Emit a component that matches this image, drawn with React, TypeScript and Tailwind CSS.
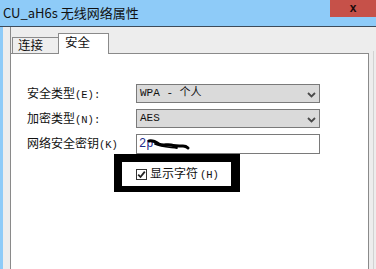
import React from 'react';

const cjk = { fontFamily: '"Noto Sans CJK SC", "Noto Sans", sans-serif' };
const mono = { fontFamily: '"Liberation Mono", "Noto Sans CJK SC", monospace' };

function Label({ text, hint }: { text: string; hint: string }) {
  return (
    <div className="w-[109px] shrink-0 text-[12px] leading-none text-[#111]" style={cjk}>
      {text}
      <span className="text-[10.5px]" style={mono}>
        {hint}
      </span>
    </div>
  );
}

function Chevron() {
  return (
    <svg width="9" height="6" viewBox="0 0 9 6" className="absolute right-[3px] top-[7px]">
      <path d="M1 1 L4.5 4.5 L8 1" fill="none" stroke="#4a4a4a" strokeWidth="1.8" />
    </svg>
  );
}

function Select({ value }: { value: string }) {
  return (
    <div className="relative h-[19px] w-[184px] border border-[#7a7a7a] bg-[#dadada] pl-[3px] flex items-center">
      <span className="text-[11px] leading-none text-[#111]" style={mono}>
        {value}
      </span>
      <Chevron />
    </div>
  );
}

export default function App() {
  return (
    <div className="relative flex h-[269px] w-[376px] flex-col overflow-hidden bg-[#ededed]">
      {/* title bar */}
      <div className="flex h-[27px] shrink-0 items-start border-b border-[#3d4b5a] bg-[#8ecbf8]">
        <div className="flex-1 pl-[3px] pt-[5px] text-[13px] leading-[15px] text-[#111]" style={cjk}>
          CU_aH6s 无线网络属性
        </div>
        <div className="flex h-[17px] w-[46px] items-center justify-center bg-[#c65149] pb-[2px]">
          <span className="text-[12px] font-bold leading-none text-[#1a0b0b]" style={{ fontFamily: '"Liberation Sans", sans-serif' }}>
            x
          </span>
        </div>
      </div>

      {/* body */}
      <div className="flex flex-1">
        <div className="w-[3px] shrink-0 bg-[#8ecbf8]" />
        <div className="w-[7px] shrink-0" />
        <div className="flex w-[359px] shrink-0 flex-col border-l border-[#8a8a8a]">
          {/* tabs */}
          <div className="flex h-[26px] shrink-0 items-end pl-[1px]">
            <div className="flex h-[16px] w-[46px] items-center justify-start border-l border-t border-[#8a8a8a] bg-[#eeeeee] pl-[5px] text-[12.5px] leading-none text-[#111]" style={cjk}>
              连接
            </div>
            <div className="relative z-10 -mb-px flex h-[21px] w-[51px] items-start border-l border-r border-t border-[#8a8a8a] bg-white pl-[6px] pt-[2px] text-[12.5px] leading-none text-[#111]" style={cjk}>
              安全
            </div>
          </div>

          {/* panel */}
          <div className="relative flex-1 border-r border-t border-[#8a8a8a] bg-white pl-[16px] pt-[30px]">
            <div className="flex h-[19px] items-center">
              <Label text="安全类型" hint="(E):" />
              <Select value="WPA - 个人" />
            </div>
            <div className="mt-[6px] flex h-[19px] items-center">
              <Label text="加密类型" hint="(N):" />
              <Select value="AES" />
            </div>
            <div className="mt-[6px] flex h-[20px] items-center">
              <Label text="网络安全密钥" hint="(K)" />
              <div className="relative flex h-[20px] w-[184px] items-center border border-[#7a7a7a] bg-white pl-[2px]">
                <span className="text-[12px] leading-none text-[#1c2a8c]" style={mono}>
                  2p
                </span>
                <svg width="44" height="16" viewBox="0 0 44 16" className="absolute left-[10px] top-[1px]">
                  <path
                    d="M2 5 C6 4 9 6 12 8 C16 10 20 8 24 9 C28 10 32 10 36 10 C38 10 40 11 41 12"
                    fill="none"
                    stroke="#000"
                    strokeWidth="3"
                    strokeLinecap="round"
                  />
                  <path d="M8 8 C14 11 22 11 30 12" fill="none" stroke="#000" strokeWidth="1.8" strokeLinecap="round" />
                </svg>
              </div>
            </div>

            {/* highlighted checkbox */}
            <div className="ml-[87px] h-[38px] w-[126px] border-b-[6px] border-l-[8px] border-r-[9px] border-t-[8px] border-black bg-white">
              <div className="flex h-full items-center pl-[14px]">
                <div className="relative h-[11px] w-[11px] border border-[#333] bg-white">
                  <svg width="9" height="9" viewBox="0 0 9 9" className="absolute left-0 top-0">
                    <path d="M1.2 4.6 L3.5 7 L7.8 1.6" fill="none" stroke="#222" strokeWidth="1.8" />
                  </svg>
                </div>
                <span className="ml-[3px] text-[12px] leading-none text-[#111]" style={cjk}>
                  显示字符
                  <span className="ml-[2px] text-[10.5px]" style={mono}>
                    (H)
                  </span>
                </span>
              </div>
            </div>
          </div>
        </div>
        <div className="w-[4px] shrink-0" />
        <div className="mt-[24px] w-px shrink-0 bg-[#d2d2d2]" />
      </div>
    </div>
  );
}
